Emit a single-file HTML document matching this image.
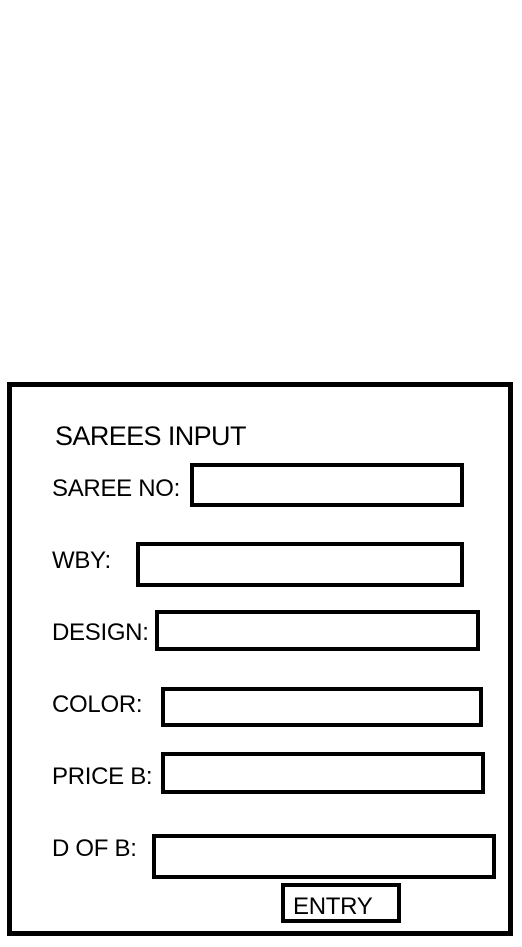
<!DOCTYPE html>
<html><head><meta charset="utf-8"><style>
body{margin:0;width:522px;height:947px;background:#fff;position:relative;overflow:hidden;font-family:"Liberation Sans",sans-serif;color:#000}
.b{position:absolute;box-sizing:border-box;border:4px solid #000}
.t{position:absolute;font-size:24px;line-height:1;white-space:nowrap;letter-spacing:-0.3px}
</style></head><body>
<div class="b" style="left:7px;top:382px;width:506px;height:554px;border-width:5px"></div>
<div class="t" style="left:55px;top:423px;font-size:27px;letter-spacing:-0.6px">SAREES INPUT</div>
<div class="t" style="left:52px;top:477px">SAREE NO:</div>
<div class="b" style="left:190px;top:463px;width:274px;height:44px"></div>
<div class="t" style="left:52px;top:549px">WBY:</div>
<div class="b" style="left:136px;top:542px;width:328px;height:45px"></div>
<div class="t" style="left:52px;top:621px">DESIGN:</div>
<div class="b" style="left:155px;top:610px;width:325px;height:41px"></div>
<div class="t" style="left:52px;top:693px">COLOR:</div>
<div class="b" style="left:161px;top:687px;width:322px;height:40px"></div>
<div class="t" style="left:52px;top:765px">PRICE B:</div>
<div class="b" style="left:161px;top:752px;width:324px;height:42px"></div>
<div class="t" style="left:52px;top:837px">D OF B:</div>
<div class="b" style="left:152px;top:834px;width:344px;height:45px"></div>
<div class="b" style="left:281px;top:883px;width:120px;height:40px"></div>
<div class="t" style="left:293px;top:895px">ENTRY</div>
</body></html>
